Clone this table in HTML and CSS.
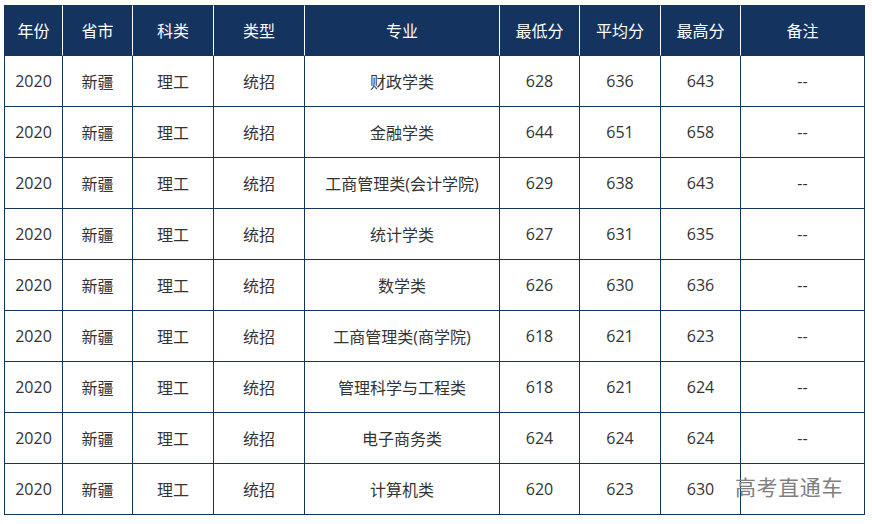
FILE: index.html
```html
<!DOCTYPE html>
<html lang="zh">
<head>
<meta charset="utf-8">
<link rel="stylesheet" href="styles.css">
</head>
<body>
<div class="wrap">
<table class="score">
<thead>
<tr><th>年份</th><th>省市</th><th>科类</th><th>类型</th><th>专业</th><th>最低分</th><th>平均分</th><th>最高分</th><th>备注</th></tr>
</thead>
<tbody>
<tr><td>2020</td><td>新疆</td><td>理工</td><td>统招</td><td>财政学类</td><td>628</td><td>636</td><td>643</td><td>--</td></tr>
<tr><td>2020</td><td>新疆</td><td>理工</td><td>统招</td><td>金融学类</td><td>644</td><td>651</td><td>658</td><td>--</td></tr>
<tr><td>2020</td><td>新疆</td><td>理工</td><td>统招</td><td>工商管理类(会计学院)</td><td>629</td><td>638</td><td>643</td><td>--</td></tr>
<tr><td>2020</td><td>新疆</td><td>理工</td><td>统招</td><td>统计学类</td><td>627</td><td>631</td><td>635</td><td>--</td></tr>
<tr><td>2020</td><td>新疆</td><td>理工</td><td>统招</td><td>数学类</td><td>626</td><td>630</td><td>636</td><td>--</td></tr>
<tr><td>2020</td><td>新疆</td><td>理工</td><td>统招</td><td>工商管理类(商学院)</td><td>618</td><td>621</td><td>623</td><td>--</td></tr>
<tr><td>2020</td><td>新疆</td><td>理工</td><td>统招</td><td>管理科学与工程类</td><td>618</td><td>621</td><td>624</td><td>--</td></tr>
<tr><td>2020</td><td>新疆</td><td>理工</td><td>统招</td><td>电子商务类</td><td>624</td><td>624</td><td>624</td><td>--</td></tr>
<tr><td>2020</td><td>新疆</td><td>理工</td><td>统招</td><td>计算机类</td><td>620</td><td>623</td><td>630</td><td></td></tr>
</tbody>
</table>
<div class="watermark">高考直通车</div>
</div>
</body>
</html>
```
FILE: styles.css
```css
html, body {
  margin: 0;
  padding: 0;
  background: #ffffff;
}
.wrap {
  position: relative;
  padding: 5px 0 0 4px;
}
.score {
  border-collapse: separate;
  border-spacing: 0;
  table-layout: fixed;
  width: 861px;
  font-family: "Open Sans", "Noto Sans CJK SC", sans-serif;
  font-size: 16px;
  color: #333333;
}
.score th,
.score td {
  box-sizing: border-box;
  padding: 0;
  text-align: center;
  vertical-align: middle;
}
.score th {
  background: #14335f;
  color: #ffffff;
  font-weight: normal;
  height: 51px;
  padding-bottom: 2px;
  border-top: 1px solid #14335f;
  border-bottom: 1px solid #14335f;
  border-right: 1px solid #ffffff;
}
.score th:first-child {
  border-left: 1px solid #14335f;
}
.score th:last-child {
  border-right-color: #14335f;
}
.score td {
  height: 51px;
  border-right: 1px solid #14335f;
  border-bottom: 1px solid #14335f;
}
.score td:first-child {
  border-left: 1px solid #14335f;
}
.score th:nth-child(1) { width: 59px; }
.score th:nth-child(2) { width: 70px; }
.score th:nth-child(3) { width: 81px; }
.score th:nth-child(4) { width: 91px; }
.score th:nth-child(5) { width: 195px; }
.score th:nth-child(6) { width: 80px; }
.score th:nth-child(7) { width: 81px; }
.score th:nth-child(8) { width: 80px; }
.score th:nth-child(9) { width: 124px; }
.watermark {
  position: absolute;
  left: 735px;
  top: 471px;
  font-family: "Noto Sans CJK SC", sans-serif;
  font-size: 21px;
  color: #7f7f7f;
  letter-spacing: 0.6px;
}
```
